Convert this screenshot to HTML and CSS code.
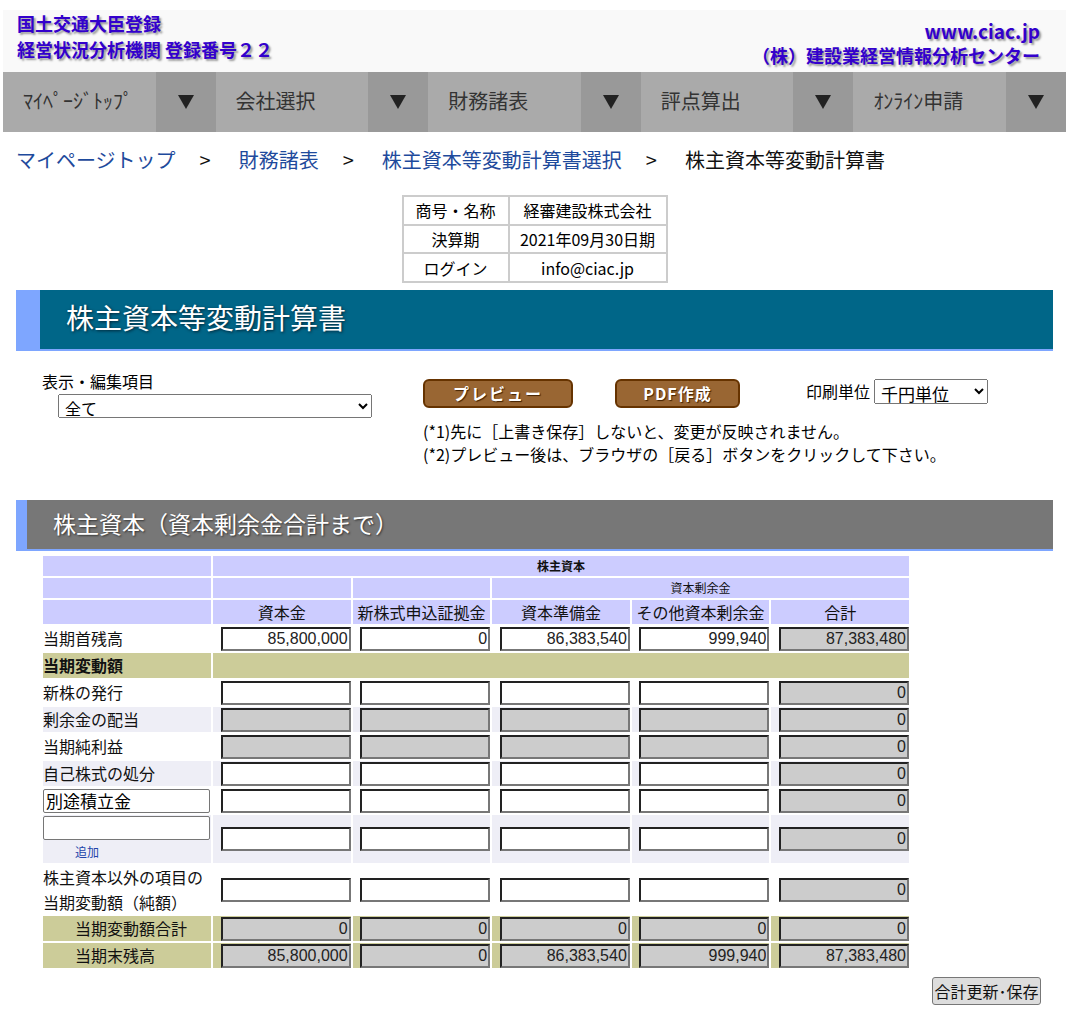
FILE: index.html
```html
<!DOCTYPE html>
<html lang="ja">
<head>
<meta charset="utf-8">
<title>株主資本等変動計算書</title>
<link rel="stylesheet" href="styles.css">
</head>
<body>
<div class="page">
  <header class="top">
    <div class="top-left">
      <div>国土交通大臣登録</div>
      <div>経営状況分析機関 登録番号２２</div>
    </div>
    <div class="top-right">
      <div class="top-url">www.ciac.jp</div>
      <div>（株）建設業経営情報分析センター</div>
    </div>
  </header>

  <nav class="gnav">
    <div class="gnav-item"><span class="gnav-label">ﾏｲﾍﾟｰｼﾞﾄｯﾌﾟ</span><span class="gnav-arrow"><svg width="16" height="14" viewBox="0 0 16 14"><polygon points="0,0 16,0 8,14" fill="#222"/></svg></span></div>
    <div class="gnav-item"><span class="gnav-label">会社選択</span><span class="gnav-arrow"><svg width="16" height="14" viewBox="0 0 16 14"><polygon points="0,0 16,0 8,14" fill="#222"/></svg></span></div>
    <div class="gnav-item"><span class="gnav-label">財務諸表</span><span class="gnav-arrow"><svg width="16" height="14" viewBox="0 0 16 14"><polygon points="0,0 16,0 8,14" fill="#222"/></svg></span></div>
    <div class="gnav-item"><span class="gnav-label">評点算出</span><span class="gnav-arrow"><svg width="16" height="14" viewBox="0 0 16 14"><polygon points="0,0 16,0 8,14" fill="#222"/></svg></span></div>
    <div class="gnav-item"><span class="gnav-label">ｵﾝﾗｲﾝ申請</span><span class="gnav-arrow"><svg width="16" height="14" viewBox="0 0 16 14"><polygon points="0,0 16,0 8,14" fill="#222"/></svg></span></div>
  </nav>

  <main class="content">
    <div class="crumbs">
      <a class="crumb-link" href="#">マイページトップ</a><span class="crumb-sep">&gt;</span><a class="crumb-link" href="#">財務諸表</a><span class="crumb-sep">&gt;</span><a class="crumb-link" href="#">株主資本等変動計算書選択</a><span class="crumb-sep">&gt;</span><span class="crumb-current">株主資本等変動計算書</span>
    </div>

    <table class="info">
      <tr><td class="info-key">商号・名称</td><td class="info-val">経審建設株式会社</td></tr>
      <tr><td class="info-key">決算期</td><td class="info-val">2021年09月30日期</td></tr>
      <tr><td class="info-key">ログイン</td><td class="info-val">info@ciac.jp</td></tr>
    </table>

    <h1 class="page-title">株主資本等変動計算書</h1>

    <div class="controls">
      <div class="ctl-view">
        <div class="ctl-label">表示・編集項目</div>
        <select class="sel-view"><option>全て</option></select>
      </div>
      <div class="ctl-main">
        <div class="btn-row">
          <button class="btn-brown btn-preview">プレビュー</button>
          <button class="btn-brown btn-pdf">PDF作成</button>
        </div>
        <div class="notes">
          <div>(*1)先に［上書き保存］しないと、変更が反映されません。</div>
          <div>(*2)プレビュー後は、ブラウザの［戻る］ボタンをクリックして下さい。</div>
        </div>
      </div>
      <div class="ctl-unit">
        <span class="unit-label">印刷単位</span>
        <select class="sel-unit"><option>千円単位</option></select>
      </div>
    </div>

    <h2 class="section-title">株主資本（資本剰余金合計まで）</h2>

    <table class="sheet">
      <colgroup>
        <col class="c-label"><col class="c-num"><col class="c-num"><col class="c-num"><col class="c-num"><col class="c-num">
      </colgroup>
      <tr class="h1">
        <th></th><th colspan="5">株主資本</th>
      </tr>
      <tr class="h2">
        <th></th><th></th><th></th><th colspan="3">資本剰余金</th>
      </tr>
      <tr class="h3">
        <th></th><th>資本金</th><th>新株式申込証拠金</th><th>資本準備金</th><th>その他資本剰余金</th><th>合計</th>
      </tr>
      <tr class="row">
        <td class="lbl">当期首残高</td>
        <td><input class="num" value="85,800,000"></td>
        <td><input class="num" value="0"></td>
        <td><input class="num" value="86,383,540"></td>
        <td><input class="num" value="999,940"></td>
        <td><input class="num dis" value="87,383,480" readonly></td>
      </tr>
      <tr class="row khaki">
        <td class="lbl strong">当期変動額</td><td colspan="5"></td>
      </tr>
      <tr class="row">
        <td class="lbl">新株の発行</td>
        <td><input class="num"></td><td><input class="num"></td><td><input class="num"></td><td><input class="num"></td>
        <td><input class="num dis" value="0" readonly></td>
      </tr>
      <tr class="row alt">
        <td class="lbl">剰余金の配当</td>
        <td><input class="num dis" readonly></td><td><input class="num dis" readonly></td><td><input class="num dis" readonly></td><td><input class="num dis" readonly></td>
        <td><input class="num dis" value="0" readonly></td>
      </tr>
      <tr class="row">
        <td class="lbl">当期純利益</td>
        <td><input class="num dis" readonly></td><td><input class="num dis" readonly></td><td><input class="num dis" readonly></td><td><input class="num dis" readonly></td>
        <td><input class="num dis" value="0" readonly></td>
      </tr>
      <tr class="row alt">
        <td class="lbl">自己株式の処分</td>
        <td><input class="num"></td><td><input class="num"></td><td><input class="num"></td><td><input class="num"></td>
        <td><input class="num dis" value="0" readonly></td>
      </tr>
      <tr class="row">
        <td class="lbl"><input class="lbl-input" value="別途積立金"></td>
        <td><input class="num"></td><td><input class="num"></td><td><input class="num"></td><td><input class="num"></td>
        <td><input class="num dis" value="0" readonly></td>
      </tr>
      <tr class="row alt tall">
        <td class="lbl"><input class="lbl-input"><a class="add-link" href="#">追加</a></td>
        <td><input class="num"></td><td><input class="num"></td><td><input class="num"></td><td><input class="num"></td>
        <td><input class="num dis" value="0" readonly></td>
      </tr>
      <tr class="row tall2">
        <td class="lbl two">株主資本以外の項目の<br>当期変動額（純額）</td>
        <td><input class="num"></td><td><input class="num"></td><td><input class="num"></td><td><input class="num"></td>
        <td><input class="num dis" value="0" readonly></td>
      </tr>
      <tr class="row khaki">
        <td class="lbl indent">当期変動額合計</td>
        <td><input class="num dis" value="0" readonly></td><td><input class="num dis" value="0" readonly></td><td><input class="num dis" value="0" readonly></td><td><input class="num dis" value="0" readonly></td>
        <td><input class="num dis" value="0" readonly></td>
      </tr>
      <tr class="row khaki">
        <td class="lbl indent">当期末残高</td>
        <td><input class="num dis" value="85,800,000" readonly></td><td><input class="num dis" value="0" readonly></td><td><input class="num dis" value="86,383,540" readonly></td><td><input class="num dis" value="999,940" readonly></td>
        <td><input class="num dis" value="87,383,480" readonly></td>
      </tr>
    </table>

    <div class="actions">
      <button class="btn-save">合計更新･保存</button>
    </div>
  </main>
</div>
</body>
</html>
```

FILE: styles.css
```css
* { box-sizing: border-box; }

body {
  margin: 0;
  background: #fff;
  color: #000;
  font-family: "Noto Sans CJK JP", "Noto Sans", sans-serif;
}

.page {
  width: 1063px;
  margin-left: 3px;
  padding-top: 10px;
}

/* header */
.top {
  height: 62px;
  background: #f9f9f9;
  display: flex;
  justify-content: space-between;
  color: #3300cc;
  font-weight: bold;
  text-shadow: 2px 2px 2px #999;
}
.top-left {
  padding-left: 14px;
  font-size: 18px;
  line-height: 26px;
}
.top-right {
  padding-right: 26px;
  padding-top: 8px;
  font-size: 18px;
  line-height: 25px;
  text-align: right;
}
.top-url { font-size: 19px; }

/* global nav */
.gnav {
  display: flex;
  height: 60px;
  background: #aaaaaa;
}
.gnav-item {
  flex: 1;
  display: flex;
}
.gnav-label {
  flex: 1;
  padding-left: 20px;
  font-size: 20px;
  line-height: 58px;
  color: #333;
}
.gnav-arrow {
  width: 60px;
  background: #999999;
  display: flex;
  align-items: center;
  justify-content: center;
}

/* content */
.content {
  padding: 0 13px;
}

.crumbs {
  padding-top: 13px;
  font-size: 20px;
  line-height: 30px;
  white-space: nowrap;
}
.crumb-link {
  color: #1e4a9c;
  text-decoration: none;
}
.crumb-sep {
  margin: 0 28px 0 24px;
  color: #111;
}
.crumb-current { color: #111; }

.info {
  margin: 20px auto 0;
  border-collapse: collapse;
  border: 2px solid #cccccc;
  font-size: 16px;
}
.info td {
  border: 2px solid #cccccc;
  height: 28.7px;
  padding: 0;
  text-align: center;
  line-height: 24px;
}
.info-key { width: 106px; }
.info-val { width: 158px; }

.page-title {
  margin: 7px 0 0;
  height: 61px;
  background: #006688;
  border-left: 24px solid #7ea6ff;
  border-bottom: 2px solid #7ea6ff;
  color: #fff;
  font-size: 28px;
  font-weight: normal;
  line-height: 54px;
  padding-left: 26px;
  text-shadow: 1px 1px 3px #002233;
}

/* controls */
.controls {
  display: flex;
  margin-top: 19px;
  font-size: 16px;
}
.ctl-view {
  margin-left: 26px;
  width: 381px;
}
.ctl-label { line-height: 22px; }
.sel-view {
  display: block;
  margin: 2px 0 0 16px;
  width: 314px;
  height: 24px;
  font-size: 16px;
  font-family: inherit;
  padding: 0 2px;
}
.ctl-main {
  width: 383px;
  padding-top: 9px;
}
.btn-row {
  display: flex;
  gap: 42px;
}
.btn-brown {
  height: 29px;
  background: #996633;
  border: 2px solid #663300;
  border-radius: 6px;
  color: #fff;
  font-family: inherit;
  font-size: 16px;
  font-weight: bold;
  line-height: 23px;
  padding: 0;
  text-shadow: 1px 1px 1px #442200;
}
.btn-preview { width: 150px; letter-spacing: 2px; }
.btn-pdf { width: 125px; letter-spacing: 1px; }
.notes {
  margin-top: 12px;
  line-height: 23px;
  white-space: nowrap;
}
.ctl-unit {
  padding-top: 9px;
  display: flex;
  align-items: flex-start;
  gap: 4px;
}
.unit-label { line-height: 24px; }
.sel-unit {
  width: 114px;
  height: 25px;
  font-size: 17px;
  font-family: inherit;
  padding: 0 2px;
}

.section-title {
  margin: 34px 0 0;
  height: 51px;
  background: #777777;
  border-left: 11px solid #7ea6ff;
  border-bottom: 2px solid #7ea6ff;
  color: #fff;
  font-size: 23px;
  font-weight: normal;
  line-height: 46px;
  padding-left: 26px;
  text-shadow: 1px 1px 2px #333;
}

/* sheet */
.sheet {
  margin: 3px 0 0 25px;
  border-collapse: separate;
  border-spacing: 2px;
  table-layout: fixed;
  width: 869px;
}
.c-label { width: 168px; }
.c-num { width: 137.6px; }

.sheet th {
  background: #ccccff;
  padding: 0;
  text-align: center;
  color: #111;
}
.h1 th { height: 20px; font-size: 12px; font-weight: bold; line-height: 20px; }
.h2 th { height: 20px; font-size: 12px; font-weight: normal; line-height: 20px; }
.h3 th { height: 24px; font-size: 16px; font-weight: normal; line-height: 24px; white-space: nowrap; }

.sheet td {
  padding: 0;
  height: 25px;
  vertical-align: middle;
  line-height: 0;
}
.row.alt td { background: #eeeef6; }
.row.khaki td { background: #cccc99; }
.row.tall td { height: 48px; }
.row.tall2 td { height: 49px; }

.sheet td.lbl {
  text-align: left;
  font-size: 16px;
  line-height: 25px;
  color: #111;
  white-space: nowrap;
}
.lbl.strong { font-weight: bold; }
.lbl.indent { padding-left: 32px; }
.sheet td.lbl.two { line-height: 24.5px; }

.num {
  display: block;
  margin: 0 0 0 auto;
  width: 130px;
  height: 24px;
  border: 2px solid;
  border-color: #222 #777 #777 #222;
  background: #fff;
  text-align: right;
  font-family: "Liberation Sans", Arial, sans-serif;
  font-size: 16px;
  line-height: 20px;
  color: #222;
  padding: 0 1px;
  border-radius: 0;
  outline: none;
}
.num.dis { background: #cccccc; }

.lbl-input {
  display: block;
  width: 167px;
  height: 24px;
  border: 1px solid #767676;
  border-radius: 2px;
  background: #fff;
  font-family: inherit;
  font-size: 17px;
  padding: 0 2px;
  margin: 0;
}
.add-link {
  display: block;
  padding-left: 32px;
  margin-top: 1px;
  font-size: 12px;
  line-height: 22px;
  color: #2244aa;
  text-decoration: none;
}

.actions {
  display: flex;
  justify-content: flex-end;
  padding-right: 12px;
  margin-top: 7px;
}
.btn-save {
  width: 109px;
  height: 28px;
  background: #dddddd;
  border: 1px solid #777;
  border-radius: 3px;
  font-family: inherit;
  font-size: 16px;
  color: #111;
  padding: 0;
  line-height: 24px;
}
```
